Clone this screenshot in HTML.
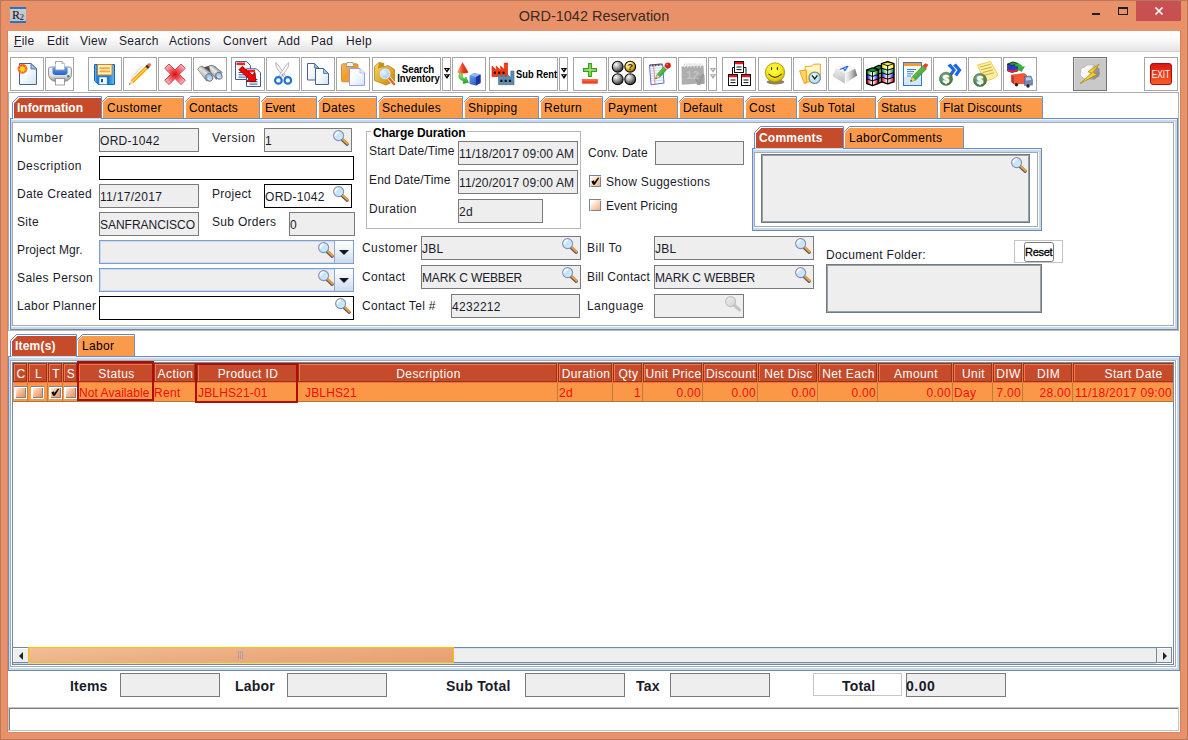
<!DOCTYPE html>
<html><head><meta charset="utf-8"><title>ORD-1042 Reservation</title>
<style>
html,body{margin:0;padding:0;}
body{width:1188px;height:740px;overflow:hidden;position:relative;background:#E99168;font-family:"Liberation Sans",Arial,sans-serif;font-size:12px;color:#1b1b2b;}
body div,body span,body svg{position:absolute;}
.t{white-space:nowrap;line-height:16px;height:16px;font-size:12px;letter-spacing:0.3px;}
.b{white-space:nowrap;line-height:16px;height:16px;font-size:12px;font-weight:bold;letter-spacing:-0.1px;}
.tab{white-space:nowrap;line-height:16px;height:16px;font-size:12px;color:#000;letter-spacing:0.35px;}
.tabs{white-space:nowrap;line-height:16px;height:16px;font-size:12px;font-weight:bold;color:#fff;letter-spacing:0.2px;}
.h{white-space:nowrap;line-height:16px;height:16px;font-size:12px;color:#fff;text-align:center;letter-spacing:0.4px;}
.r{white-space:nowrap;line-height:16px;height:16px;font-size:12px;color:#F20D0D;letter-spacing:0.3px;}
.tot{white-space:nowrap;line-height:18px;height:18px;font-size:14px;font-weight:bold;color:#1b1b2b;letter-spacing:0.2px;}
.ic{overflow:visible;}
</style></head><body>
<svg width="0" height="0" style="left:0;top:0"><defs>
<linearGradient id="lens" x1="0" y1="0" x2="1" y2="1"><stop offset="0" stop-color="#F4FCFF"/><stop offset="0.5" stop-color="#BFE6FA"/><stop offset="1" stop-color="#D8F0FC"/></linearGradient>
<linearGradient id="lensg" x1="0" y1="0" x2="1" y2="1"><stop offset="0" stop-color="#F0F0F0"/><stop offset="1" stop-color="#D0D0D0"/></linearGradient>
<symbol id="mag" viewBox="0 0 18 18" overflow="visible">
 <line x1="10.3" y1="10.8" x2="15.2" y2="15.2" stroke="#5A5A78" stroke-width="3.4" stroke-linecap="round"/>
 <line x1="10.8" y1="10.2" x2="15.6" y2="14.6" stroke="#F4A030" stroke-width="2.2" stroke-linecap="round"/>
 <circle cx="6.6" cy="6.6" r="5" fill="url(#lens)" stroke="#8C8CB0" stroke-width="1.1"/>
 <path d="M3.4 6.2 A3.4 3.4 0 0 1 6.4 3.2" fill="none" stroke="#fff" stroke-width="1.2" stroke-linecap="round"/>
</symbol>
<symbol id="magd" viewBox="0 0 18 18" overflow="visible">
 <line x1="10.5" y1="10.5" x2="15.4" y2="14.9" stroke="#C4C4C4" stroke-width="3.2" stroke-linecap="round"/>
 <circle cx="6.6" cy="6.6" r="5" fill="url(#lensg)" stroke="#C0C0C0" stroke-width="1.1"/>
</symbol>
</defs></svg>

<div style="left:0px;top:0px;width:1188px;height:740px;background:#E99168;box-shadow:inset 0 0 0 1px #B9785A;"></div>
<span style="left:0;top:5px;width:1188px;text-align:center;font-size:15px;line-height:22px;color:#3A2A22;white-space:nowrap;transform:scaleX(0.965);transform-origin:594px 0;" id="ttl">ORD-1042 Reservation</span>
<div style="left:10px;top:7px;width:16px;height:16px;background:linear-gradient(#1F70C4 0,#2A78C8 2px,#C9CCD2 2px,#BFC3CA 14px,#2A78C8 14px,#1F70C4 16px);"></div>
<span style="left:10px;top:8px;width:16px;height:14px;line-height:14px;font-size:12px;font-family:'Liberation Serif',serif;color:#0c0c0c;text-align:center;letter-spacing:-0.6px;white-space:nowrap;">R<span style="position:static;font-size:9px;vertical-align:-1px;letter-spacing:0;">2</span></span>
<div style="left:1092px;top:13px;width:8px;height:2px;background:#1E1E1E;"></div>
<div style="left:1118px;top:7px;width:10px;height:8px;border:1px solid #1E1E1E;border-top-width:2px;box-sizing:border-box;"></div>
<div style="left:1136px;top:1px;width:45px;height:20px;background:#C75050;"></div>
<svg style="left:1154px;top:6px" width="10" height="10" viewBox="0 0 10 10"><path d="M1.500 1.500 L8.500 8.500 M8.500 1.500 L1.500 8.500" stroke="#fff" stroke-width="1.700" fill="none"/></svg>
<div style="left:8px;top:31px;width:1172px;height:701px;background:#fff;"></div>
<div style="left:8px;top:31px;width:1172px;height:20px;background:linear-gradient(#FFFFFF,#FBFBFB 40%,#E4E4E4);border-bottom:1px solid #D0D0D0;"></div>
<span class="t" style="left:14px;top:33px;color:#1b1b2b;"><span style="position:static;text-decoration:underline;">F</span>ile</span>
<span class="t" style="left:47px;top:33px;">Edit</span>
<span class="t" style="left:80px;top:33px;">View</span>
<span class="t" style="left:119px;top:33px;">Search</span>
<span class="t" style="left:169px;top:33px;">Actions</span>
<span class="t" style="left:223px;top:33px;">Convert</span>
<span class="t" style="left:278px;top:33px;">Add</span>
<span class="t" style="left:311px;top:33px;">Pad</span>
<span class="t" style="left:346px;top:33px;">Help</span>
<div style="left:10px;top:57px;width:34px;height:34px;border:1px solid #A6A6A6;box-sizing:border-box;background:#fff;"></div>
<div style="left:45px;top:57px;width:29px;height:34px;border:1px solid #A6A6A6;box-sizing:border-box;background:#fff;"></div>
<div style="left:88px;top:57px;width:34px;height:34px;border:1px solid #A6A6A6;box-sizing:border-box;background:#fff;"></div>
<div style="left:123px;top:57px;width:34px;height:34px;border:1px solid #A6A6A6;box-sizing:border-box;background:#fff;"></div>
<div style="left:158px;top:57px;width:34px;height:34px;border:1px solid #A6A6A6;box-sizing:border-box;background:#fff;"></div>
<div style="left:193px;top:57px;width:34px;height:34px;border:1px solid #A6A6A6;box-sizing:border-box;background:#fff;"></div>
<div style="left:231px;top:57px;width:34px;height:34px;border:1px solid #A6A6A6;box-sizing:border-box;background:#fff;"></div>
<div style="left:266px;top:57px;width:34px;height:34px;border:1px solid #A6A6A6;box-sizing:border-box;background:#fff;"></div>
<div style="left:301px;top:57px;width:34px;height:34px;border:1px solid #A6A6A6;box-sizing:border-box;background:#fff;"></div>
<div style="left:336px;top:57px;width:34px;height:34px;border:1px solid #A6A6A6;box-sizing:border-box;background:#fff;"></div>
<div style="left:372px;top:57px;width:69px;height:34px;border:1px solid #A6A6A6;box-sizing:border-box;background:#fff;"></div>
<div style="left:442px;top:57px;width:9px;height:34px;border:1px solid #A6A6A6;box-sizing:border-box;background:#fff;"></div>
<div style="left:452px;top:57px;width:34px;height:34px;border:1px solid #A6A6A6;box-sizing:border-box;background:#fff;"></div>
<div style="left:489px;top:57px;width:69px;height:34px;border:1px solid #A6A6A6;box-sizing:border-box;background:#fff;"></div>
<div style="left:559px;top:57px;width:9px;height:34px;border:1px solid #A6A6A6;box-sizing:border-box;background:#fff;"></div>
<div style="left:573px;top:57px;width:34px;height:34px;border:1px solid #A6A6A6;box-sizing:border-box;background:#fff;"></div>
<div style="left:608px;top:57px;width:34px;height:34px;border:1px solid #A6A6A6;box-sizing:border-box;background:#fff;"></div>
<div style="left:643px;top:57px;width:34px;height:34px;border:1px solid #A6A6A6;box-sizing:border-box;background:#fff;"></div>
<div style="left:678px;top:57px;width:29px;height:34px;border:1px solid #A6A6A6;box-sizing:border-box;background:#fff;"></div>
<div style="left:708px;top:57px;width:9px;height:34px;border:1px solid #A6A6A6;box-sizing:border-box;background:#fff;"></div>
<div style="left:722px;top:57px;width:34px;height:34px;border:1px solid #A6A6A6;box-sizing:border-box;background:#fff;"></div>
<div style="left:758px;top:57px;width:34px;height:34px;border:1px solid #A6A6A6;box-sizing:border-box;background:#fff;"></div>
<div style="left:793px;top:57px;width:34px;height:34px;border:1px solid #A6A6A6;box-sizing:border-box;background:#fff;"></div>
<div style="left:828px;top:57px;width:34px;height:34px;border:1px solid #A6A6A6;box-sizing:border-box;background:#fff;"></div>
<div style="left:863px;top:57px;width:34px;height:34px;border:1px solid #A6A6A6;box-sizing:border-box;background:#fff;"></div>
<div style="left:898px;top:57px;width:34px;height:34px;border:1px solid #A6A6A6;box-sizing:border-box;background:#fff;"></div>
<div style="left:933px;top:57px;width:34px;height:34px;border:1px solid #A6A6A6;box-sizing:border-box;background:#fff;"></div>
<div style="left:968px;top:57px;width:34px;height:34px;border:1px solid #A6A6A6;box-sizing:border-box;background:#fff;"></div>
<div style="left:1003px;top:57px;width:34px;height:34px;border:1px solid #A6A6A6;box-sizing:border-box;background:#fff;"></div>
<div style="left:1144px;top:57px;width:34px;height:34px;border:1px solid #A6A6A6;box-sizing:border-box;background:#fff;"></div>
<div style="left:1073px;top:57px;width:34px;height:34px;border:1px solid #747474;box-sizing:border-box;background:#C9C9C9;box-shadow:inset 1px 1px 0 #D8D8D8;"></div>
<div style="left:8px;top:92px;width:1171px;height:1px;background:#ABABAB;"></div>
<div style="left:8px;top:92px;width:1px;height:239px;background:#ABABAB;"></div>
<svg class="ic" style="left:0;top:0" width="1188" height="95" viewBox="0 0 1188 95">
<defs>
<linearGradient id="gdoc" x1="0" y1="0" x2="1" y2="1"><stop offset="0" stop-color="#fff"/><stop offset="0.5" stop-color="#F4F9FE"/><stop offset="1" stop-color="#CFE3F6"/></linearGradient>
<radialGradient id="gstar"><stop offset="0" stop-color="#FFE000"/><stop offset="0.35" stop-color="#FFB000"/><stop offset="0.6" stop-color="#F24A24"/><stop offset="0.8" stop-color="#F25A34" stop-opacity="0.85"/><stop offset="1" stop-color="#F46A44" stop-opacity="0"/></radialGradient>
<linearGradient id="gprn" x1="0" y1="0" x2="0" y2="1"><stop offset="0" stop-color="#F6F6F6"/><stop offset="0.6" stop-color="#E2E2E2"/><stop offset="1" stop-color="#8E8E8E"/></linearGradient>
<linearGradient id="gblue" x1="0" y1="0" x2="0" y2="1"><stop offset="0" stop-color="#58A0F8"/><stop offset="1" stop-color="#2060D8"/></linearGradient>
<linearGradient id="gsave" x1="0" y1="0" x2="1" y2="0"><stop offset="0" stop-color="#8CCBF5"/><stop offset="0.12" stop-color="#1C7CD6"/><stop offset="0.7" stop-color="#1C7CD6"/><stop offset="1" stop-color="#6CC0F4"/></linearGradient>
<radialGradient id="gx" cx="0.5" cy="0.5" r="0.62"><stop offset="0" stop-color="#E00808"/><stop offset="0.22" stop-color="#E83038"/><stop offset="0.55" stop-color="#F0747C"/><stop offset="1" stop-color="#FAC8CC"/></radialGradient>
<radialGradient id="glens2" cx="0.4" cy="0.7" r="0.7"><stop offset="0" stop-color="#D8ECFF"/><stop offset="1" stop-color="#78ACEC"/></radialGradient>
<linearGradient id="gbinL" x1="0.75" y1="0.1" x2="0.2" y2="0.8"><stop offset="0" stop-color="#4A4A4A"/><stop offset="0.45" stop-color="#E4E4E4"/><stop offset="0.7" stop-color="#C4C4C4"/><stop offset="1" stop-color="#5E5E5E"/></linearGradient><linearGradient id="gbinR" x1="0.75" y1="0.1" x2="0.2" y2="0.8"><stop offset="0" stop-color="#5A5A5A"/><stop offset="0.45" stop-color="#EAEAEA"/><stop offset="0.7" stop-color="#C8C8C8"/><stop offset="1" stop-color="#4E4E4E"/></linearGradient>
<linearGradient id="gclip" x1="0" y1="0" x2="1" y2="1"><stop offset="0" stop-color="#F8B860"/><stop offset="0.5" stop-color="#F49828"/><stop offset="1" stop-color="#F8B050"/></linearGradient>
<linearGradient id="gbox" x1="0" y1="0" x2="1" y2="1"><stop offset="0" stop-color="#F8D868"/><stop offset="0.6" stop-color="#E0A820"/><stop offset="1" stop-color="#B88010"/></linearGradient>
<radialGradient id="glens3" cx="0.35" cy="0.35" r="0.8"><stop offset="0" stop-color="#EAF6FC"/><stop offset="1" stop-color="#8CC4DC"/></radialGradient>
<linearGradient id="gcone" x1="0" y1="0" x2="1" y2="0"><stop offset="0" stop-color="#FFB090"/><stop offset="0.5" stop-color="#F04020"/><stop offset="1" stop-color="#C82000"/></linearGradient>
<linearGradient id="gcube" x1="0" y1="0" x2="1" y2="1"><stop offset="0" stop-color="#78A8F0"/><stop offset="1" stop-color="#1840B0"/></linearGradient>
<linearGradient id="ggreen" x1="0" y1="0" x2="0" y2="1"><stop offset="0" stop-color="#98F070"/><stop offset="1" stop-color="#20A020"/></linearGradient>
<linearGradient id="gplus" x1="0" y1="0" x2="1" y2="1"><stop offset="0" stop-color="#48A818"/><stop offset="0.5" stop-color="#B8E890"/><stop offset="1" stop-color="#38981038"/></linearGradient>
<linearGradient id="gminus" x1="0" y1="0" x2="0" y2="1"><stop offset="0" stop-color="#FF7848"/><stop offset="1" stop-color="#E83010"/></linearGradient>
<radialGradient id="gball" cx="0.35" cy="0.3" r="0.75"><stop offset="0" stop-color="#FFFFFF"/><stop offset="0.45" stop-color="#A4A4A4"/><stop offset="1" stop-color="#2A2A2A"/></radialGradient>
<radialGradient id="gbally" cx="0.35" cy="0.3" r="0.75"><stop offset="0" stop-color="#FFFFE0"/><stop offset="0.5" stop-color="#F8D030"/><stop offset="1" stop-color="#906000"/></radialGradient>
<radialGradient id="gsmile" cx="0.45" cy="0.38" r="0.7"><stop offset="0" stop-color="#FFFF50"/><stop offset="0.55" stop-color="#F6E818"/><stop offset="0.85" stop-color="#CDB600"/><stop offset="1" stop-color="#8E7C00"/></radialGradient>
<linearGradient id="gfold" x1="0" y1="0" x2="0" y2="1"><stop offset="0" stop-color="#FFFBD8"/><stop offset="0.5" stop-color="#FFEC70"/><stop offset="1" stop-color="#FFD418"/></linearGradient>
<radialGradient id="gclock" cx="0.4" cy="0.35" r="0.7"><stop offset="0" stop-color="#EAF9FF"/><stop offset="1" stop-color="#A4DAF0"/></radialGradient>
<linearGradient id="gkeyr" x1="0" y1="0" x2="1" y2="0"><stop offset="0" stop-color="#FFFFFF"/><stop offset="0.45" stop-color="#D0D0D0"/><stop offset="1" stop-color="#6E6E6E"/></linearGradient><linearGradient id="gkeyl" x1="0" y1="0" x2="0" y2="1"><stop offset="0" stop-color="#F0F0F0"/><stop offset="1" stop-color="#BDBDBD"/></linearGradient>
<radialGradient id="gdollar" cx="0.4" cy="0.35" r="0.7"><stop offset="0" stop-color="#88B080"/><stop offset="1" stop-color="#38703A"/></radialGradient>
<linearGradient id="gexit" x1="0" y1="0" x2="0" y2="1"><stop offset="0" stop-color="#D81810"/><stop offset="0.5" stop-color="#F03818"/><stop offset="1" stop-color="#F86028"/></linearGradient>
<linearGradient id="gcloud" x1="0" y1="0" x2="1" y2="0.3"><stop offset="0" stop-color="#FFFFFF"/><stop offset="0.55" stop-color="#F4F4F4"/><stop offset="0.75" stop-color="#A0A0A0"/><stop offset="1" stop-color="#8A8A8A"/></linearGradient><linearGradient id="gpen" x1="0" y1="0" x2="1" y2="1"><stop offset="0" stop-color="#90E060"/><stop offset="1" stop-color="#208818"/></linearGradient>
</defs>
<path d="M19.5 63.5 H31 L36.5 69 V84.5 H19.5 Z" fill="url(#gdoc)" stroke="#47608F"/><path d="M31 63.5 V69 H36.5 Z" fill="#9CCBF0" stroke="#47608F" stroke-width="0.8"/>
<circle cx="22.5" cy="68.800" r="5.500" fill="url(#gstar)"/><path d="M22.5 64.5 L23.4 67.6 L26.3 66.2 L24.6 68.9 L27.4 70.2 L24.2 70.4 L24.6 73.5 L22.5 71.2 L20.2 73.4 L20.7 70.3 L17.7 69.8 L20.5 68.4 L18.9 65.8 L21.7 67.4 Z" fill="#FFD810" opacity="0.85"/>
<path d="M55.5 61.5 H62 L64.5 64 V71 H55.5 Z" fill="#fff" stroke="#9A9A9A" stroke-width="0.9"/><path d="M62 61.5 V64 H64.5" fill="#E8E8E8" stroke="#9A9A9A" stroke-width="0.7"/>
<path d="M48.5 69 Q48.5 67 51 67 H69 Q71.5 67 71.5 69 V74 Q71.5 80 64.5 81.5 H55.5 Q48.5 80 48.5 74 Z" fill="url(#gprn)" stroke="#7C7C7C" stroke-width="0.8"/>
<path d="M52.5 67.3 H67.5 V72 Q67.5 75 64 75 H56 Q52.500 75 52.5 72 Z" fill="url(#gblue)"/><rect x="55" y="67.3" width="10" height="3.6" fill="#8A8A92"/><rect x="55.6" y="64" width="8.8" height="5.6" fill="#fff"/>
<rect x="55.5" y="78.5" width="9" height="6.5" fill="#fff" stroke="#8A8A8A" stroke-width="0.8"/><circle cx="68.3" cy="76.3" r="1.2" fill="#20A030"/>
<path d="M94.5 64.5 H114.500 V84.5 H98.5 L94.5 80.8 Z" fill="url(#gsave)" stroke="#1464B8"/>
<rect x="97.5" y="64.5" width="14.5" height="10.5" fill="#FFEFC4" stroke="#CC8424"/><rect x="99.5" y="67.3" width="10.5" height="1.8" fill="#F8A830"/><rect x="99.5" y="70.5" width="10.5" height="1.8" fill="#F8A830"/>
<rect x="99.3" y="77.3" width="7.6" height="7" fill="#F4F8FF"/><rect x="101" y="79" width="2" height="3.3" fill="#1458C8"/>
<path d="M130.500 80.500 L143.500 66.500 L140 66 L131 76 Z" fill="#C8C8C8" opacity="0.350"/>
<path d="M129 84.700 L130.950 80.310 L133.450 82.890 Z" fill="#F0D0A8"/><path d="M129 84.700 L129.700 83.100 L130.600 84 Z" fill="#303030"/>
<path d="M130.950 80.310 L145.350 66.300 L147.850 68.900 L133.450 82.890 Z" fill="#F8A000"/><path d="M131.800 81.200 L146.200 67.200 L147 68 L132.600 82 Z" fill="#FFD860"/>
<path d="M145.350 66.300 L147.100 64.600 L149.600 67.200 L147.850 68.900 Z" fill="#2A2A2A"/><path d="M147.100 64.600 Q149 62.600 150.700 63.800 Q151.900 65.300 149.600 67.200 Z" fill="#F26A38"/>
<path d="M169 64 L175 70 L181 64 L185.300 68.300 L179.300 74.300 L185.300 80.300 L181 84.600 L175 78.600 L169 84.600 L164.700 80.300 L170.700 74.300 L164.700 68.300 Z" fill="url(#gx)" stroke="#CC3840" stroke-width="0.900" stroke-linejoin="round"/>
<path d="M204 67.300 L210.500 65.300 L216 66.800 L217.500 72.500 L211 75 L205.500 72 Z" fill="#4C4C4C"/>
<path d="M197.800 69.600 Q198.500 66.300 202.300 66 L213 74.200 L206.800 81.300 Z" fill="url(#gbinL)" stroke="#5A5A5A" stroke-width="0.500"/>
<path d="M208.800 66.300 Q211 64.800 213.800 65.800 L222.300 72.300 L216.300 79.500 L210.500 72.500 Z" fill="url(#gbinR)" stroke="#5A5A5A" stroke-width="0.500"/>
<ellipse cx="209.300" cy="77.400" rx="3.300" ry="3.900" transform="rotate(-20 209.3 77.4)" fill="url(#glens2)" stroke="#6C6C6C" stroke-width="0.900"/><ellipse cx="218.900" cy="75.700" rx="3" ry="3.600" transform="rotate(-20 218.9 75.7)" fill="url(#glens2)" stroke="#6C6C6C" stroke-width="0.900"/>
<path d="M235.5 61.5 H246.5 L250.5 65.5 V79.5 H235.5 Z" fill="#fff" stroke="#3A5AA4"/>
<rect x="236.5" y="62.5" width="8.5" height="2.600" fill="#F82010"/>
<rect x="238.5" y="72.0" width="9" height="1" fill="#3A5AA4"/>
<rect x="238.5" y="74.3" width="9" height="1" fill="#3A5AA4"/>
<rect x="238.5" y="76.6" width="9" height="1" fill="#3A5AA4"/>
<path d="M246.5 68.8 H256.5 L260.5 72.8 V86.5 H246.5 Z" fill="#fff" stroke="#3A5AA4"/>
<rect x="247.5" y="69.8" width="7.5" height="2.600" fill="#F82010"/>
<rect x="249.5" y="79.0" width="8" height="1" fill="#3A5AA4"/>
<rect x="249.5" y="81.3" width="8" height="1" fill="#3A5AA4"/>
<rect x="249.5" y="83.6" width="8" height="1" fill="#3A5AA4"/>
<path d="M238.800 69.800 L242.300 66.300 L252.200 75 L255 72.300 L256 81.400 L246.300 81.600 L249 78.800 Z" fill="#F80000" stroke="#500000" stroke-width="0.700" stroke-linejoin="round"/>
<path d="M275.800 62.500 Q275 66.500 278.500 70.500 L284.500 78 L286 76.500 L279 66 Z" fill="#F4F4F4" stroke="#A8A8A8" stroke-width="0.8"/><path d="M288.700 62.500 Q289.500 66.500 286 70.500 L280 78 L278.500 76.500 L285.500 66 Z" fill="#FAFAFA" stroke="#A8A8A8" stroke-width="0.8"/>
<circle cx="278.400" cy="80.400" r="3.300" fill="none" stroke="#2072D4" stroke-width="2.200"/><circle cx="287.800" cy="80.400" r="3.300" fill="none" stroke="#2072D4" stroke-width="2.200"/><circle cx="282.600" cy="75" r="0.800" fill="#777"/>
<path d="M307.5 63.5 H314.5 L319.0 68.0 V80.0 H307.5 Z" fill="url(#gdoc)" stroke="#47608F"/><path d="M314.5 63.5 V68.0 H319.0 Z" fill="#8CCBF2" stroke="#47608F" stroke-width="0.700"/>
<path d="M315.5 68.5 H323.5 L328.5 73.5 V84.5 H315.5 Z" fill="url(#gdoc)" stroke="#47608F"/><path d="M323.5 68.5 V73.5 H328.5 Z" fill="#8CCBF2" stroke="#47608F" stroke-width="0.700"/>
<rect x="341.500" y="63.800" width="16.500" height="18" rx="1.500" fill="url(#gclip)" stroke="#D08828" stroke-width="0.900"/><path d="M346 66.500 L347 62.500 H353 L354 66.500 Z" fill="#F4F4F4" stroke="#8A8A8A" stroke-width="0.800"/>
<path d="M349.500 68.500 H360 L364.500 73 V85.500 H349.500 Z" fill="url(#gdoc)" stroke="#8C94E0" stroke-width="0.900"/><path d="M360 68.500 V73 H364.500" fill="#E8F0FC" stroke="#A8B0E8" stroke-width="0.700"/>
<path d="M374.500 66.500 L379 62.500 L384 63.500 L383 67 L388 65.500 L394.500 69.500 V81 L386 85 L374.500 80.500 Z" fill="url(#gbox)" stroke="#A87810" stroke-width="0.700"/><path d="M379 62.500 L384 63.500 L383 67 L378 68.500 Z" fill="#C89018"/>
<path d="M389 78 L394 84" stroke="#F0F0F0" stroke-width="4" stroke-linecap="round"/><path d="M389 78 L394 84" stroke="#F06020" stroke-width="2.400" stroke-linecap="round"/><circle cx="385" cy="73.700" r="5" fill="url(#glens3)" stroke="#E8E8E8" stroke-width="1.600"/><circle cx="385" cy="73.700" r="5.700" fill="none" stroke="#9A9A9A" stroke-width="0.500"/>
<text x="418" y="72.600" font-family="Liberation Sans,Arial,sans-serif" font-size="10" font-weight="bold" fill="#000" text-anchor="middle" textLength="32.5" lengthAdjust="spacingAndGlyphs">Search</text><text x="418.500" y="82" font-family="Liberation Sans,Arial,sans-serif" font-size="10" font-weight="bold" fill="#000" text-anchor="middle" textLength="42.5" lengthAdjust="spacingAndGlyphs">Inventory</text>
<path d="M443.8 68 H450.2 L447 72.8 Z M443.8 74.2 H450.2 L447 79 Z" fill="#000"/>
<circle cx="446.8" cy="69.400" r="0.600" fill="#fff"/><circle cx="446.8" cy="75.600" r="0.600" fill="#fff"/>
<path d="M462.500 62 L468.500 72.500 Q463 74.500 457 72.500 Z" fill="url(#gcone)"/>
<path d="M469.500 75.500 L474 73 L480.500 74.500 V83 L476 85.500 L469.500 84 Z" fill="url(#gcube)"/><path d="M469.500 75.500 L474 73 L480.500 74.500 L476 77 Z" fill="#90B8F4"/><path d="M476 77 L480.500 74.500 V83 L476 85.500 Z" fill="#1838A0"/>
<path d="M459.500 73.500 Q457 79 463.500 81 L463 83.500 L468.500 82.500 L466 77 L465 79 Q461.500 78 462.500 74 Z" fill="url(#ggreen)" stroke="#18901A" stroke-width="0.500"/>
<path d="M492 76.5 V66 L496.3 70.2 V66 L500.6 70.2 V66 L504.3 69.6 V63 H507.5 V76.5 Z" fill="#F83810" stroke="#C82000" stroke-width="0.600" stroke-linejoin="miter"/>
<rect x="493.8" y="71.64" width="2.200" height="2.200" fill="#111"/>
<rect x="498.1" y="71.64" width="2.200" height="2.200" fill="#111"/>
<rect x="502.40000000000003" y="71.64" width="2.200" height="2.200" fill="#111"/>
<path d="M498.5 84.7 V74 L502.8 78.2 V74 L507.1 78.2 V74 L510.8 77.6 V71 H514.0 V84.7 Z" fill="#5C8CB0" stroke="#3C6C90" stroke-width="0.600" stroke-linejoin="miter"/>
<rect x="500.3" y="79.768" width="2.200" height="2.200" fill="#111"/>
<rect x="504.6" y="79.768" width="2.200" height="2.200" fill="#111"/>
<rect x="508.90000000000003" y="79.768" width="2.200" height="2.200" fill="#111"/>
<text x="516" y="77.500" font-family="Liberation Sans,Arial,sans-serif" font-size="10" font-weight="bold" fill="#000" textLength="41" lengthAdjust="spacingAndGlyphs">Sub Rent</text>
<path d="M560.8 68 H567.2 L564 72.8 Z M560.8 74.2 H567.2 L564 79 Z" fill="#000"/>
<circle cx="563.8" cy="69.400" r="0.600" fill="#fff"/><circle cx="563.8" cy="75.600" r="0.600" fill="#fff"/>
<path d="M588.700 63.600 H591.300 V68.700 H596.400 V71.300 H591.300 V76.400 H588.700 V71.300 H583.600 V68.700 H588.700 Z" fill="#B4E88C" stroke="#36A014" stroke-width="1.300"/>
<rect x="582.300" y="79.300" width="15.400" height="4" fill="url(#gminus)" stroke="#E84020" stroke-width="0.500"/>
<circle cx="617.7" cy="66.7" r="5.400" fill="url(#gball)" stroke="#0a0a0a" stroke-width="1.100"/>
<circle cx="630.2" cy="66.7" r="5.400" fill="url(#gbally)" stroke="#0a0a0a" stroke-width="1.100"/>
<circle cx="617.7" cy="79.2" r="5.400" fill="url(#gball)" stroke="#0a0a0a" stroke-width="1.100"/>
<circle cx="630.2" cy="79.2" r="5.400" fill="url(#gball)" stroke="#0a0a0a" stroke-width="1.100"/>
<text x="630.200" y="70.200" font-family="Liberation Sans,Arial,sans-serif" font-size="9.500" font-weight="bold" fill="#222" text-anchor="middle">?</text>
<path d="M649.500 65 L662.500 64 L664 83 L651 84.800 Z" fill="#F8FBFF" stroke="#5858C8" stroke-width="0.900"/>
<path d="M651 68.5 L663 67.7" stroke="#A8C8F0" stroke-width="0.600"/>
<path d="M651 71.0 L663 70.2" stroke="#A8C8F0" stroke-width="0.600"/>
<path d="M651 73.5 L663 72.7" stroke="#A8C8F0" stroke-width="0.600"/>
<path d="M651 76.0 L663 75.2" stroke="#A8C8F0" stroke-width="0.600"/>
<path d="M651 78.5 L663 77.7" stroke="#A8C8F0" stroke-width="0.600"/>
<path d="M651 81.0 L663 80.2" stroke="#A8C8F0" stroke-width="0.600"/>
<path d="M653.700 65.500 L655 84" stroke="#F07050" stroke-width="0.800"/><path d="M650.500 65.500 L661.500 64.600" stroke="#333" stroke-width="2.200" stroke-dasharray="0.800 0.700"/>
<path d="M655.500 78.800 L657 74.500 L665 65.500 L668 68.200 L660 77 Z" fill="url(#gpen)" stroke="#187818" stroke-width="0.500"/><path d="M655.500 78.800 L657 74.500 L660 77 Z" fill="#E8C8A0"/><path d="M655.500 78.800 L656 77.300 L657 78.200 Z" fill="#333"/><circle cx="667.800" cy="65.600" r="3" fill="#E01808"/><circle cx="667" cy="64.600" r="1" fill="#F87060"/><path d="M664 66.500 L667 69.300" stroke="#C0C0C0" stroke-width="1.200"/>
<path d="M681.500 66.500 L703.500 65.500 L704.500 83.500 L697.500 85 L696.500 83.800 L681.800 84.800 Z" fill="#AEAEAE"/><path d="M696.500 76 L704.500 75 L704.500 83.500 L697.500 85 Z" fill="#A2A2A2"/>
<path d="M684.5 67.500 V65 Q684.5 63.600 685.7 63.800 Q686.7 64.200 686.5 66" fill="none" stroke="#E4E4E4" stroke-width="1.100"/>
<path d="M687.7 67.500 V65 Q687.7 63.600 688.9000000000001 63.800 Q689.9000000000001 64.200 689.7 66" fill="none" stroke="#E4E4E4" stroke-width="1.100"/>
<path d="M690.9 67.500 V65 Q690.9 63.600 692.1 63.800 Q693.1 64.200 692.9 66" fill="none" stroke="#E4E4E4" stroke-width="1.100"/>
<path d="M694.1 67.500 V65 Q694.1 63.600 695.3000000000001 63.800 Q696.3000000000001 64.200 696.1 66" fill="none" stroke="#E4E4E4" stroke-width="1.100"/>
<path d="M697.3 67.500 V65 Q697.3 63.600 698.5 63.800 Q699.5 64.200 699.3 66" fill="none" stroke="#E4E4E4" stroke-width="1.100"/>
<path d="M700.5 67.500 V65 Q700.5 63.600 701.7 63.800 Q702.7 64.200 702.5 66" fill="none" stroke="#E4E4E4" stroke-width="1.100"/>
<text x="692.500" y="78.500" font-family="Liberation Sans,Arial,sans-serif" font-size="11.500" font-weight="bold" fill="#C2C2C2" text-anchor="middle">12</text><path d="M695.500 79 L699 84 L703.500 74" fill="none" stroke="#969696" stroke-width="1.500"/>
<path d="M709.8 68 H716.2 L713 72.8 Z M709.8 74.2 H716.2 L713 79 Z" fill="#ABABAB"/>
<circle cx="712.8" cy="69.400" r="0.600" fill="#fff"/><circle cx="712.8" cy="75.600" r="0.600" fill="#fff"/>
<path d="M732.500 74 V67.500 H746 V74" fill="none" stroke="#111" stroke-width="1"/>
<rect x="734.5" y="61.5" width="9" height="11" fill="#fff" stroke="#111" stroke-width="1"/><rect x="735.0" y="62.0" width="8" height="2.200" fill="#F01018"/><rect x="736.5" y="66.5" width="5" height="1" fill="#111"/><rect x="736.5" y="69.1" width="5" height="1" fill="#111"/>
<rect x="728.5" y="74.5" width="9" height="11" fill="#fff" stroke="#111" stroke-width="1"/><rect x="729.0" y="75.0" width="8" height="2.200" fill="#F01018"/><rect x="730.5" y="79.5" width="5" height="1" fill="#111"/><rect x="730.5" y="82.1" width="5" height="1" fill="#111"/>
<rect x="741.5" y="74.5" width="9" height="11" fill="#fff" stroke="#111" stroke-width="1"/><rect x="742.0" y="75.0" width="8" height="2.200" fill="#F01018"/><rect x="743.5" y="79.5" width="5" height="1" fill="#111"/><rect x="743.5" y="82.1" width="5" height="1" fill="#111"/>
<ellipse cx="775.500" cy="81.900" rx="8.800" ry="2.500" fill="#3E3000" opacity="0.600"/><circle cx="775" cy="72.500" r="9.700" fill="url(#gsmile)" stroke="#94820A" stroke-width="0.700"/>
<ellipse cx="771.600" cy="68.600" rx="0.650" ry="1.800" fill="#3C3C28"/><ellipse cx="777.400" cy="68.600" rx="0.650" ry="1.800" fill="#3C3C28"/><path d="M768.800 74.200 Q775 80.600 781.300 74.200" fill="none" stroke="#4A3A10" stroke-width="1.100" stroke-linecap="round"/>
<path d="M805 66.500 L811.500 66 L813.500 64.300 L820.300 64 V80 L806 82.500 Z" fill="#FFF6C8" stroke="#E89818" stroke-width="0.900" stroke-linejoin="round"/>
<path d="M806.300 68.500 L817.500 67.500 V80 L806.300 82.500 Z" fill="url(#gfold)"/>
<path d="M799.600 70.800 L806.300 70.200 L806.300 83 L804.300 83.500 Z" fill="#FFD860" stroke="#E89818" stroke-width="0.900" stroke-linejoin="round"/>
<circle cx="814.700" cy="77.800" r="5.700" fill="url(#gclock)" stroke="#7E86A0" stroke-width="1.200"/><path d="M812 75.300 L814.700 79 L817.400 75.300" fill="none" stroke="#181818" stroke-width="1.300"/>
<path d="M836 68 L844 63.800 L855 68.500 L857.200 75.600 L844.700 83.600 L832.500 76 Z" fill="#EDEDED"/>
<path d="M845.200 73 L855 68.500 L857.200 75.600 L844.700 83.600 Z" fill="url(#gkeyr)"/>
<path d="M836 68 L845.200 73 L844.700 83.600 L832.500 76 Z" fill="url(#gkeyl)"/>
<path d="M836 68 L844 63.800 L855 68.500 L845.200 73 Z" fill="#FCFCFC" stroke="#F0F0F0" stroke-width="0.600"/>
<g transform="translate(844.8 68.3) rotate(22) skewX(-30)"><text x="0" y="3" font-family="Liberation Sans,Arial,sans-serif" font-size="9" font-weight="bold" fill="#1060E0" text-anchor="middle">A</text></g>
<linearGradient id="cga" x1="0" y1="0" x2="1" y2="0"><stop offset="0" stop-color="#10A020"/><stop offset="1" stop-color="#fff"/></linearGradient><linearGradient id="cgb" x1="0" y1="0" x2="1" y2="0"><stop offset="0" stop-color="#fff"/><stop offset="1" stop-color="#10A020"/></linearGradient>
<linearGradient id="cba" x1="0" y1="0" x2="1" y2="0"><stop offset="0" stop-color="#2030F0"/><stop offset="1" stop-color="#fff"/></linearGradient><linearGradient id="cbb" x1="0" y1="0" x2="1" y2="0"><stop offset="0" stop-color="#fff"/><stop offset="1" stop-color="#2030F0"/></linearGradient>
<linearGradient id="cra" x1="0" y1="0" x2="1" y2="0"><stop offset="0" stop-color="#F01820"/><stop offset="1" stop-color="#fff"/></linearGradient><linearGradient id="crb" x1="0" y1="0" x2="1" y2="0"><stop offset="0" stop-color="#fff"/><stop offset="1" stop-color="#F01820"/></linearGradient>
<linearGradient id="cya" x1="0" y1="0" x2="1" y2="0"><stop offset="0" stop-color="#E8E810"/><stop offset="1" stop-color="#fff"/></linearGradient><linearGradient id="cyb" x1="0" y1="0" x2="1" y2="0"><stop offset="0" stop-color="#fff"/><stop offset="1" stop-color="#E8E810"/></linearGradient>
<path d="M874.5 67.5 L879.0 65.5 L883.5 67.5 V81.0 L879.0 83.0 L874.5 81.0 Z" fill="#000" stroke="#000" stroke-width="1.600" stroke-linejoin="round"/>
<path d="M875.1 68.0 L878.5 69.8 V73.3 L875.1 71.5 Z" fill="url(#cga)"/>
<path d="M882.9 68.0 L879.5 69.8 V73.3 L882.9 71.5 Z" fill="url(#cgb)"/>
<path d="M875.1 72.5 L878.5 74.3 V77.8 L875.1 76.0 Z" fill="url(#cba)"/>
<path d="M882.9 72.5 L879.5 74.3 V77.8 L882.9 76.0 Z" fill="url(#cbb)"/>
<path d="M875.1 77.0 L878.5 78.8 V82.3 L875.1 80.5 Z" fill="url(#cra)"/>
<path d="M882.9 77.0 L879.5 78.8 V82.3 L882.9 80.5 Z" fill="url(#crb)"/>
<path d="M875.7 67.5 L879.0 66.1 L882.3 67.5 L879.0 69.0 Z" fill="#0C9C1C"/>
<path d="M866.8 70 L872.5 68 L878.1999999999999 70 V83.5 L872.5 85.5 L866.8 83.5 Z" fill="#000" stroke="#000" stroke-width="1.600" stroke-linejoin="round"/>
<path d="M867.4 70.5 L872.0 72.3 V75.8 L867.4 74.0 Z" fill="url(#cga)"/>
<path d="M877.5999999999999 70.5 L873.0 72.3 V75.8 L877.5999999999999 74.0 Z" fill="url(#cgb)"/>
<path d="M867.4 75.0 L872.0 76.8 V80.3 L867.4 78.5 Z" fill="url(#cba)"/>
<path d="M877.5999999999999 75.0 L873.0 76.8 V80.3 L877.5999999999999 78.5 Z" fill="url(#cbb)"/>
<path d="M867.4 79.5 L872.0 81.3 V84.8 L867.4 83.0 Z" fill="url(#cra)"/>
<path d="M877.5999999999999 79.5 L873.0 81.3 V84.8 L877.5999999999999 83.0 Z" fill="url(#crb)"/>
<path d="M868.0 70 L872.5 68.6 L876.9999999999999 70 L872.5 71.5 Z" fill="#0C9C1C"/>
<path d="M881.5 63.8 L887.7 61.8 L893.9 63.8 V81.8 L887.7 83.8 L881.5 81.8 Z" fill="#000" stroke="#000" stroke-width="1.600" stroke-linejoin="round"/>
<path d="M882.1 64.3 L887.2 66.1 V69.6 L882.1 67.8 Z" fill="url(#cya)"/>
<path d="M893.3 64.3 L888.2 66.1 V69.6 L893.3 67.8 Z" fill="url(#cyb)"/>
<path d="M882.1 68.8 L887.2 70.6 V74.1 L882.1 72.3 Z" fill="url(#cga)"/>
<path d="M893.3 68.8 L888.2 70.6 V74.1 L893.3 72.3 Z" fill="url(#cgb)"/>
<path d="M882.1 73.3 L887.2 75.1 V78.6 L882.1 76.8 Z" fill="url(#cba)"/>
<path d="M893.3 73.3 L888.2 75.1 V78.6 L893.3 76.8 Z" fill="url(#cbb)"/>
<path d="M882.1 77.8 L887.2 79.6 V83.1 L882.1 81.3 Z" fill="url(#cra)"/>
<path d="M893.3 77.8 L888.2 79.6 V83.1 L893.3 81.3 Z" fill="url(#crb)"/>
<path d="M882.7 63.8 L887.7 62.4 L892.6999999999999 63.8 L887.7 65.3 Z" fill="#F0F020"/>
<rect x="903.500" y="62.500" width="18" height="23" fill="#F4F8FF" stroke="#2878D8" stroke-width="1"/><rect x="904" y="63" width="17" height="3" fill="#FF9828"/><path d="M904 77 H921 V85 H904 Z" fill="#D8E8F8"/>
<rect x="907" y="69.0" width="9" height="0.900" fill="#2878D8"/>
<rect x="907" y="71.2" width="7" height="0.900" fill="#2878D8"/>
<rect x="907" y="73.4" width="6" height="0.900" fill="#2878D8"/>
<rect x="907" y="75.6" width="4" height="0.900" fill="#2878D8"/>
<path d="M910.500 81.500 L912 77 L923 65.500 L926.500 68.800 L915.500 80.300 Z" fill="url(#gpen)" stroke="#206818" stroke-width="0.500"/><path d="M910.500 81.500 L912 77 L915.500 80.300 Z" fill="#F0D060"/><path d="M910.500 81.500 L911 79.800 L912.200 80.900 Z" fill="#222"/><path d="M922.500 66 L924.800 63.600 Q927 63 928.300 65 L926 68.300 Z" fill="#F04020"/>
<path d="M947.500 65.500 L950.500 63.500 L956 70 L951.500 76.500 L949 74.500 L952 70 Z M953 65.500 L956 63.500 L961.500 70 L957 76.500 L954.500 74.500 L957.500 70 Z" fill="#1C68E0"/>
<circle cx="946" cy="78.8" r="6.600" fill="url(#gdollar)" stroke="#2C6030" stroke-width="0.500"/><text x="946" y="82.8" font-family="Liberation Sans,Arial,sans-serif" font-size="11.500" font-weight="bold" fill="#fff" stroke="#fff" stroke-width="0.500" text-anchor="middle">$</text>
<path d="M977.500 65 L990.500 61.500 L998 75 Q993 80.500 984 80.500 Z" fill="#FFF0A0" stroke="#F0C030" stroke-width="0.800"/>
<path d="M980.0 67.0 L990.5 64.3" stroke="#D2B448" stroke-width="1.100"/>
<path d="M981.2 69.8 L991.7 67.1" stroke="#D2B448" stroke-width="1.100"/>
<path d="M982.4 72.6 L992.9 69.89999999999999" stroke="#D2B448" stroke-width="1.100"/>
<path d="M983.6 75.4 L994.1 72.69999999999999" stroke="#D2B448" stroke-width="1.100"/>
<circle cx="980" cy="80" r="6.600" fill="url(#gdollar)" stroke="#2C6030" stroke-width="0.500"/><text x="980" y="84" font-family="Liberation Sans,Arial,sans-serif" font-size="11.500" font-weight="bold" fill="#fff" stroke="#fff" stroke-width="0.500" text-anchor="middle">$</text>
<path d="M1007.500 64 L1013 62 L1018 63.500 V71 L1012 72.500 L1007.500 71 Z" fill="#2838D8" stroke="#111" stroke-width="0.600"/><path d="M1007.500 64 L1013 62 L1018 63.500 L1012.500 65.500 Z" fill="#18A028" stroke="#111" stroke-width="0.500"/><path d="M1007.500 69 L1012 70.500 L1018 69 V71 L1012 72.500 L1007.500 71 Z" fill="#E82020"/>
<path d="M1015 63.500 Q1021 63 1022 67 L1024.500 66.500 L1021.500 71.500 L1017 69 L1019.500 68 Q1019 66 1015 66.300 Z" fill="#28B838" stroke="#107018" stroke-width="0.400"/>
<path d="M1011.500 75 L1024 73.500 L1026.500 75 V83.500 L1014 84 L1011.500 82 Z" fill="#F05838" stroke="#B83020" stroke-width="0.500"/><path d="M1011.500 75 L1014 76.500 V84 L1011.500 82 Z" fill="#C83820"/>
<path d="M1024.500 76.500 L1031 76 L1032.500 80 V85 L1024.500 85.500 Z" fill="#7888B0" stroke="#48587C" stroke-width="0.500"/><path d="M1026 77.500 L1030.500 77.200 L1031.500 80 L1026 80.400 Z" fill="#B8D0F0"/><circle cx="1016.500" cy="84.800" r="1.700" fill="#222"/><circle cx="1028" cy="86" r="1.700" fill="#222"/>
<path d="M1082.500 77.500 Q1079 75 1080.800 71.500 Q1080.500 67.500 1084.500 67.300 Q1086.500 63.800 1090.500 65 Q1094 63.500 1096 66.500 Q1100 67.500 1099.300 71.500 Q1101 75.500 1097 77.500 Q1094.500 80.500 1090.500 79 Q1086 81 1082.500 77.500 Z" fill="url(#gcloud)" stroke="#9C9C9C" stroke-width="0.500"/>
<path d="M1099.300 64 L1088 71.700 L1091.800 73 L1080 83.600 L1097.300 74.300 L1092.800 72.600 Z" fill="#F8D028" stroke="#A88408" stroke-width="0.700" stroke-linejoin="round"/>
<rect x="1150.500" y="63.500" width="21" height="21" rx="2.500" fill="url(#gexit)" stroke="#A81010" stroke-width="1"/><text x="1161" y="78.200" font-family="Liberation Sans,Arial,sans-serif" font-size="11" fill="#fff" text-anchor="middle" textLength="18.3" lengthAdjust="spacingAndGlyphs">EXIT</text>
</svg>
<div style="left:8px;top:330px;width:1171px;height:1px;background:#B9B9B9;"></div>
<div style="left:1178px;top:92px;width:1px;height:239px;background:#B4B4B4;"></div>
<div style="left:10px;top:118px;width:1168px;height:212px;background:#C4DAF0;box-sizing:border-box;border:1px solid #7189A3;border-top-color:#6A8ACB;border-left-color:#6A8ACB;"></div>
<div style="left:11px;top:119px;width:1166px;height:1px;background:#EEF5FC;"></div>
<div style="left:12px;top:122px;width:1162px;height:204px;background:#fff;box-sizing:border-box;border:1px solid #A9A9A9;"></div>
<div style="left:1174px;top:122px;width:1px;height:205px;background:#fff;"></div>
<div style="left:12px;top:326px;width:1163px;height:1px;background:#fff;"></div>
<svg class="ic" style="left:0;top:0" width="1188" height="119" viewBox="0 0 1188 119" shape-rendering="auto"><path d="M12.5 118 V102.5 L18.5 96.5 H101.5 V118" fill="#fff" stroke="#6A8ACB" stroke-width="1"/><path d="M14 118 V103.3 L19.3 98 H101 V118 Z" fill="#C54B2B"/><path d="M102 118 V101.5 L107.5 96 H184 V118 Z" fill="#fff"/><path d="M102.2 101.8 L107.5 96.5 H183.5" fill="none" stroke="#6F87A2" stroke-width="1"/><path d="M183.5 96.5 V118" fill="none" stroke="#7391C2" stroke-width="1"/><path d="M103 118 V102.4 L107.4 98 H183 V118 Z" fill="#FB9A4B"/><path d="M185 118 V101.5 L190.5 96 H260 V118 Z" fill="#fff"/><path d="M185.2 101.8 L190.5 96.5 H259.5" fill="none" stroke="#6F87A2" stroke-width="1"/><path d="M259.5 96.5 V118" fill="none" stroke="#7391C2" stroke-width="1"/><path d="M186 118 V102.4 L190.4 98 H259 V118 Z" fill="#FB9A4B"/><path d="M261 118 V101.5 L266.5 96 H317 V118 Z" fill="#fff"/><path d="M261.2 101.8 L266.5 96.5 H316.5" fill="none" stroke="#6F87A2" stroke-width="1"/><path d="M316.5 96.5 V118" fill="none" stroke="#7391C2" stroke-width="1"/><path d="M262 118 V102.4 L266.4 98 H316 V118 Z" fill="#FB9A4B"/><path d="M318 118 V101.5 L323.5 96 H377 V118 Z" fill="#fff"/><path d="M318.2 101.8 L323.5 96.5 H376.5" fill="none" stroke="#6F87A2" stroke-width="1"/><path d="M376.5 96.5 V118" fill="none" stroke="#7391C2" stroke-width="1"/><path d="M319 118 V102.4 L323.4 98 H376 V118 Z" fill="#FB9A4B"/><path d="M378 118 V101.5 L383.5 96 H463 V118 Z" fill="#fff"/><path d="M378.2 101.8 L383.5 96.5 H462.5" fill="none" stroke="#6F87A2" stroke-width="1"/><path d="M462.5 96.5 V118" fill="none" stroke="#7391C2" stroke-width="1"/><path d="M379 118 V102.4 L383.4 98 H462 V118 Z" fill="#FB9A4B"/><path d="M464 118 V101.5 L469.5 96 H539 V118 Z" fill="#fff"/><path d="M464.2 101.8 L469.5 96.5 H538.5" fill="none" stroke="#6F87A2" stroke-width="1"/><path d="M538.5 96.5 V118" fill="none" stroke="#7391C2" stroke-width="1"/><path d="M465 118 V102.4 L469.4 98 H538 V118 Z" fill="#FB9A4B"/><path d="M540 118 V101.5 L545.5 96 H603 V118 Z" fill="#fff"/><path d="M540.2 101.8 L545.5 96.5 H602.5" fill="none" stroke="#6F87A2" stroke-width="1"/><path d="M602.5 96.5 V118" fill="none" stroke="#7391C2" stroke-width="1"/><path d="M541 118 V102.4 L545.4 98 H602 V118 Z" fill="#FB9A4B"/><path d="M604 118 V101.5 L609.5 96 H678 V118 Z" fill="#fff"/><path d="M604.2 101.8 L609.5 96.5 H677.5" fill="none" stroke="#6F87A2" stroke-width="1"/><path d="M677.5 96.5 V118" fill="none" stroke="#7391C2" stroke-width="1"/><path d="M605 118 V102.4 L609.4 98 H677 V118 Z" fill="#FB9A4B"/><path d="M679 118 V101.5 L684.5 96 H744 V118 Z" fill="#fff"/><path d="M679.2 101.8 L684.5 96.5 H743.5" fill="none" stroke="#6F87A2" stroke-width="1"/><path d="M743.5 96.5 V118" fill="none" stroke="#7391C2" stroke-width="1"/><path d="M680 118 V102.4 L684.4 98 H743 V118 Z" fill="#FB9A4B"/><path d="M745 118 V101.5 L750.5 96 H797 V118 Z" fill="#fff"/><path d="M745.2 101.8 L750.5 96.5 H796.5" fill="none" stroke="#6F87A2" stroke-width="1"/><path d="M796.5 96.5 V118" fill="none" stroke="#7391C2" stroke-width="1"/><path d="M746 118 V102.4 L750.4 98 H796 V118 Z" fill="#FB9A4B"/><path d="M798 118 V101.5 L803.5 96 H876 V118 Z" fill="#fff"/><path d="M798.2 101.8 L803.5 96.5 H875.5" fill="none" stroke="#6F87A2" stroke-width="1"/><path d="M875.5 96.5 V118" fill="none" stroke="#7391C2" stroke-width="1"/><path d="M799 118 V102.4 L803.4 98 H875 V118 Z" fill="#FB9A4B"/><path d="M877 118 V101.5 L882.5 96 H938 V118 Z" fill="#fff"/><path d="M877.2 101.8 L882.5 96.5 H937.5" fill="none" stroke="#6F87A2" stroke-width="1"/><path d="M937.5 96.5 V118" fill="none" stroke="#7391C2" stroke-width="1"/><path d="M878 118 V102.4 L882.4 98 H937 V118 Z" fill="#FB9A4B"/><path d="M939 118 V101.5 L944.5 96 H1043 V118 Z" fill="#fff"/><path d="M939.2 101.8 L944.5 96.5 H1042.5" fill="none" stroke="#6F87A2" stroke-width="1"/><path d="M1042.5 96.5 V118" fill="none" stroke="#7391C2" stroke-width="1"/><path d="M940 118 V102.4 L944.4 98 H1042 V118 Z" fill="#FB9A4B"/></svg>
<span class="tabs" style="left:17px;top:100px;letter-spacing:0.0px;">Information</span>
<span class="tab" style="left:107px;top:100px;">Customer</span>
<span class="tab" style="left:189px;top:100px;letter-spacing:0.2px;">Contacts</span>
<span class="tab" style="left:265px;top:100px;letter-spacing:-0.15px;">Event</span>
<span class="tab" style="left:322px;top:100px;">Dates</span>
<span class="tab" style="left:382px;top:100px;">Schedules</span>
<span class="tab" style="left:468px;top:100px;">Shipping</span>
<span class="tab" style="left:544px;top:100px;">Return</span>
<span class="tab" style="left:608px;top:100px;letter-spacing:0.25px;">Payment</span>
<span class="tab" style="left:683px;top:100px;letter-spacing:0.2px;">Default</span>
<span class="tab" style="left:749px;top:100px;">Cost</span>
<span class="tab" style="left:802px;top:100px;">Sub Total</span>
<span class="tab" style="left:881px;top:100px;letter-spacing:0.2px;">Status</span>
<span class="tab" style="left:943px;top:100px;letter-spacing:0.2px;">Flat Discounts</span>
<div style="left:13px;top:118px;width:88px;height:1px;background:#C4DAF0;"></div>
<span class="t" style="left:17px;top:130px;letter-spacing:0.6px;">Number</span>
<span class="t" style="left:17px;top:158px;letter-spacing:0.45px;">Description</span>
<span class="t" style="left:17px;top:186px;letter-spacing:0.3px;">Date Created</span>
<span class="t" style="left:17px;top:214px;letter-spacing:0.3px;">Site</span>
<span class="t" style="left:17px;top:242px;letter-spacing:0.15px;">Project Mgr.</span>
<span class="t" style="left:17px;top:270px;letter-spacing:0.4px;">Sales Person</span>
<span class="t" style="left:17px;top:298px;letter-spacing:0.3px;">Labor Planner</span>
<div style="left:99px;top:128px;width:100px;height:24px;background:#EEEEEE;border:1px solid #7A7A7A;box-sizing:border-box;"></div>
<span class="t" style="left:100px;top:133px;">ORD-1042</span>
<div style="left:99px;top:156px;width:255px;height:24px;background:#fff;border:1px solid #000;box-sizing:border-box;"></div>
<div style="left:99px;top:184px;width:100px;height:24px;background:#EEEEEE;border:1px solid #7A7A7A;box-sizing:border-box;"></div>
<span class="t" style="left:100px;top:189px;">11/17/2017</span>
<div style="left:99px;top:212px;width:100px;height:24px;background:#EEEEEE;border:1px solid #7A7A7A;box-sizing:border-box;"></div>
<span class="t" style="left:100px;top:217px;letter-spacing:-0.03px;">SANFRANCISCO</span>
<span class="t" style="left:212px;top:130px;letter-spacing:0.5px;">Version</span>
<div style="left:264px;top:128px;width:88px;height:24px;background:#EEEEEE;border:1px solid #7A7A7A;box-sizing:border-box;"></div>
<span class="t" style="left:265px;top:133px;">1</span>
<svg class="ic" style="left:332px;top:129px" width="18" height="18" viewBox="0 0 18 18"><use href="#mag"/></svg>
<span class="t" style="left:212px;top:186px;">Project</span>
<div style="left:264px;top:184px;width:88px;height:24px;background:#fff;border:1px solid #000;box-sizing:border-box;"></div>
<span class="t" style="left:265px;top:189px;">ORD-1042</span>
<svg class="ic" style="left:332px;top:185px" width="18" height="18" viewBox="0 0 18 18"><use href="#mag"/></svg>
<span class="t" style="left:212px;top:214px;">Sub Orders</span>
<div style="left:289px;top:212px;width:66px;height:24px;background:#EEEEEE;border:1px solid #7A7A7A;box-sizing:border-box;"></div>
<span class="t" style="left:290px;top:217px;">0</span>
<div style="left:99px;top:240px;width:255px;height:24px;background:#EEEEEE;border:1px solid #7F9DC9;box-shadow:inset 0 0 0 1px #C9DBF0;box-sizing:border-box;"></div>
<svg class="ic" style="left:317px;top:241px" width="18" height="18" viewBox="0 0 18 18"><use href="#mag"/></svg>
<div style="left:334px;top:241px;width:19px;height:22px;background:linear-gradient(#FFFFFF,#EAF1F9 45%,#C9DBEE);border-left:1px solid #8FA9CF;box-sizing:border-box;"></div>
<svg class="ic" style="left:339px;top:250px" width="10" height="5" viewBox="0 0 10 5"><path d="M0 0 H10 L5 5 Z" fill="#1a1a1a"/></svg>
<div style="left:99px;top:268px;width:255px;height:24px;background:#EEEEEE;border:1px solid #7F9DC9;box-shadow:inset 0 0 0 1px #C9DBF0;box-sizing:border-box;"></div>
<svg class="ic" style="left:317px;top:269px" width="18" height="18" viewBox="0 0 18 18"><use href="#mag"/></svg>
<div style="left:334px;top:269px;width:19px;height:22px;background:linear-gradient(#FFFFFF,#EAF1F9 45%,#C9DBEE);border-left:1px solid #8FA9CF;box-sizing:border-box;"></div>
<svg class="ic" style="left:339px;top:278px" width="10" height="5" viewBox="0 0 10 5"><path d="M0 0 H10 L5 5 Z" fill="#1a1a1a"/></svg>
<div style="left:99px;top:296px;width:255px;height:24px;background:#fff;border:1px solid #000;box-sizing:border-box;"></div>
<svg class="ic" style="left:334px;top:297px" width="18" height="18" viewBox="0 0 18 18"><use href="#mag"/></svg>
<div style="left:366px;top:131px;width:215px;height:98px;border:1px solid #B8B8B8;box-sizing:border-box;"></div>
<div style="left:371px;top:126px;width:96px;height:14px;background:#fff;"></div>
<span class="b" style="left:373px;top:125px;color:#000;">Charge Duration</span>
<span class="t" style="left:369px;top:143px;letter-spacing:0.13px;">Start Date/Time</span>
<div style="left:458px;top:141px;width:120px;height:24px;background:#EEEEEE;border:1px solid #7A7A7A;box-sizing:border-box;"></div>
<span class="t" style="left:459px;top:146px;letter-spacing:0.1px;">11/18/2017 09:00 AM</span>
<span class="t" style="left:369px;top:172px;letter-spacing:0.15px;">End Date/Time</span>
<div style="left:458px;top:170px;width:120px;height:24px;background:#EEEEEE;border:1px solid #7A7A7A;box-sizing:border-box;"></div>
<span class="t" style="left:459px;top:175px;letter-spacing:0.1px;">11/20/2017 09:00 AM</span>
<span class="t" style="left:369px;top:201px;">Duration</span>
<div style="left:458px;top:199px;width:85px;height:24px;background:#EEEEEE;border:1px solid #7A7A7A;box-sizing:border-box;"></div>
<span class="t" style="left:459px;top:204px;">2d</span>
<span class="t" style="left:588px;top:145px;letter-spacing:0.05px;">Conv. Date</span>
<div style="left:655px;top:141px;width:89px;height:24px;background:#EEEEEE;border:1px solid #7A7A7A;box-sizing:border-box;"></div>
<div style="left:589px;top:175px;width:12px;height:12px;background:linear-gradient(135deg,#FFFFFF 22%,#FBD3B0 58%,#F6A468 100%);"></div>
<div style="left:589px;top:175px;width:12px;height:1px;background:#6F87A2;"></div>
<div style="left:589px;top:175px;width:1px;height:12px;background:#6F87A2;"></div>
<div style="left:591px;top:186px;width:10px;height:1px;background:#6F87A2;"></div>
<div style="left:600px;top:177px;width:1px;height:10px;background:#6F87A2;"></div>
<svg class="ic" style="left:589px;top:175px" width="12" height="12" viewBox="0 0 12 12"><path d="M2.3 6.4 L4.8 5.2 L5.4 6.900 L9 2.400 L10.200 3.100 L5.900 9.800 L4.100 9.800 Z" fill="#0a0a0a"/></svg>
<span class="t" style="left:606px;top:174px;">Show Suggestions</span>
<div style="left:589px;top:199px;width:12px;height:12px;background:linear-gradient(135deg,#FFFFFF 22%,#FBD3B0 58%,#F6A468 100%);"></div>
<div style="left:589px;top:199px;width:12px;height:1px;background:#6F87A2;"></div>
<div style="left:589px;top:199px;width:1px;height:12px;background:#6F87A2;"></div>
<div style="left:591px;top:210px;width:10px;height:1px;background:#6F87A2;"></div>
<div style="left:600px;top:201px;width:1px;height:10px;background:#6F87A2;"></div>
<span class="t" style="left:606px;top:198px;letter-spacing:0.05px;">Event Pricing</span>
<span class="t" style="left:362px;top:240px;letter-spacing:0.45px;">Customer</span>
<div style="left:421px;top:236px;width:160px;height:24px;background:#EEEEEE;border:1px solid #7A7A7A;box-sizing:border-box;"></div>
<span class="t" style="left:422px;top:241px;">JBL</span>
<svg class="ic" style="left:561px;top:237px" width="18" height="18" viewBox="0 0 18 18"><use href="#mag"/></svg>
<span class="t" style="left:362px;top:269px;">Contact</span>
<div style="left:421px;top:265px;width:160px;height:24px;background:#EEEEEE;border:1px solid #7A7A7A;box-sizing:border-box;"></div>
<span class="t" style="left:422px;top:270px;letter-spacing:-0.15px;">MARK C WEBBER</span>
<svg class="ic" style="left:561px;top:266px" width="18" height="18" viewBox="0 0 18 18"><use href="#mag"/></svg>
<span class="t" style="left:362px;top:298px;letter-spacing:0.3px;">Contact Tel #</span>
<div style="left:451px;top:294px;width:129px;height:24px;background:#EEEEEE;border:1px solid #7A7A7A;box-sizing:border-box;"></div>
<span class="t" style="left:452px;top:299px;">4232212</span>
<span class="t" style="left:587px;top:240px;letter-spacing:0.5px;">Bill To</span>
<div style="left:654px;top:236px;width:160px;height:24px;background:#EEEEEE;border:1px solid #7A7A7A;box-sizing:border-box;"></div>
<span class="t" style="left:655px;top:241px;">JBL</span>
<svg class="ic" style="left:794px;top:237px" width="18" height="18" viewBox="0 0 18 18"><use href="#mag"/></svg>
<span class="t" style="left:587px;top:269px;letter-spacing:0.2px;">Bill Contact</span>
<div style="left:654px;top:265px;width:160px;height:24px;background:#EEEEEE;border:1px solid #7A7A7A;box-sizing:border-box;"></div>
<span class="t" style="left:655px;top:270px;letter-spacing:-0.15px;">MARK C WEBBER</span>
<svg class="ic" style="left:794px;top:266px" width="18" height="18" viewBox="0 0 18 18"><use href="#mag"/></svg>
<span class="t" style="left:587px;top:298px;letter-spacing:0.45px;">Language</span>
<div style="left:654px;top:294px;width:90px;height:24px;background:#EEEEEE;border:1px solid #7A7A7A;box-sizing:border-box;"></div>
<svg class="ic" style="left:724px;top:295px" width="18" height="18" viewBox="0 0 18 18"><use href="#magd"/></svg>
<div style="left:752px;top:148px;width:290px;height:83px;background:#C4DAF0;box-sizing:border-box;border:1px solid #7189A3;border-top-color:#6A8ACB;border-left-color:#6A8ACB;"></div>
<div style="left:753px;top:149px;width:288px;height:1px;background:#EEF5FC;"></div>
<div style="left:754px;top:152px;width:284px;height:75px;background:#fff;box-sizing:border-box;border:1px solid #A9A9A9;"></div>
<div style="left:1038px;top:152px;width:1px;height:76px;background:#fff;"></div>
<div style="left:754px;top:227px;width:285px;height:1px;background:#fff;"></div>
<svg class="ic" style="left:0;top:0" width="1188" height="149" viewBox="0 0 1188 149" shape-rendering="auto"><path d="M754.5 148 V132.5 L760.5 126.5 H843.5 V148" fill="#fff" stroke="#6A8ACB" stroke-width="1"/><path d="M756 148 V133.3 L761.3 128 H843 V148 Z" fill="#C54B2B"/><path d="M844 148 V131.5 L849.5 126 H964 V148 Z" fill="#fff"/><path d="M844.2 131.8 L849.5 126.5 H963.5" fill="none" stroke="#6F87A2" stroke-width="1"/><path d="M963.5 126.5 V148" fill="none" stroke="#7391C2" stroke-width="1"/><path d="M845 148 V132.4 L849.4 128 H963 V148 Z" fill="#FB9A4B"/></svg>
<span class="tabs" style="left:759px;top:130px;">Comments</span>
<span class="tab" style="left:849px;top:130px;">LaborComments</span>
<div style="left:755px;top:148px;width:88px;height:1px;background:#C4DAF0;"></div>
<div style="left:761px;top:154px;width:269px;height:69px;background:#EEEEEE;box-sizing:border-box;border:1px solid #6F7982;box-shadow:inset 0 0 0 1px #9AA1A8;"></div>
<svg class="ic" style="left:1010px;top:156px" width="18" height="18" viewBox="0 0 18 18"><use href="#mag"/></svg>
<span class="t" style="left:826px;top:247px;letter-spacing:0.28px;">Document Folder:</span>
<div style="left:1014px;top:240px;width:49px;height:23px;border:1px solid #C4C4C4;box-sizing:border-box;background:#fff;"></div>
<div style="left:1024px;top:242px;width:30px;height:20px;border:1px solid #7C7C7C;border-radius:2.5px;box-sizing:border-box;background:#fff;"></div>
<span class="t" style="left:1025px;top:244px;color:#000;font-size:11px;letter-spacing:-0.3px;-webkit-text-stroke:0.3px #000;">Reset</span>
<div style="left:826px;top:264px;width:216px;height:49px;background:#EEEEEE;box-sizing:border-box;border:1px solid #6F7982;box-shadow:inset 0 0 0 1px #9AA1A8;"></div>
<div style="left:8px;top:356px;width:1172px;height:315px;background:#C4DAF0;box-sizing:border-box;border:1px solid #7189A3;border-top-color:#6A8ACB;border-left-color:#6A8ACB;"></div>
<div style="left:9px;top:357px;width:1170px;height:1px;background:#EEF5FC;"></div>
<div style="left:10px;top:360px;width:1166px;height:307px;background:#fff;box-sizing:border-box;border:1px solid #A9A9A9;"></div>
<div style="left:1176px;top:360px;width:1px;height:308px;background:#fff;"></div>
<div style="left:10px;top:667px;width:1167px;height:1px;background:#fff;"></div>
<svg class="ic" style="left:0;top:0" width="1188" height="357" viewBox="0 0 1188 357" shape-rendering="auto"><path d="M10.5 356 V340.5 L16.5 334.5 H76.5 V356" fill="#fff" stroke="#6A8ACB" stroke-width="1"/><path d="M12 356 V341.3 L17.3 336 H76 V356 Z" fill="#C54B2B"/><path d="M77 356 V339.5 L82.5 334 H135 V356 Z" fill="#fff"/><path d="M77.2 339.8 L82.5 334.5 H134.5" fill="none" stroke="#6F87A2" stroke-width="1"/><path d="M134.5 334.5 V356" fill="none" stroke="#7391C2" stroke-width="1"/><path d="M78 356 V340.4 L82.4 336 H134 V356 Z" fill="#FB9A4B"/></svg>
<span class="tabs" style="left:15px;top:338px;">Item(s)</span>
<span class="tab" style="left:82px;top:338px;">Labor</span>
<div style="left:11px;top:356px;width:65px;height:1px;background:#C4DAF0;"></div>
<div style="left:12px;top:362px;width:1162px;height:303px;background:#fff;box-sizing:border-box;border:1px solid #7189A3;"></div>
<div style="left:13px;top:363px;width:1160px;height:20px;background:#FF6E3C;"></div>
<div style="left:13px;top:383px;width:1160px;height:18px;background:#FA9848;"></div>
<div style="left:13px;top:363px;width:1160px;height:39px;overflow:hidden;">
<div style="left:0px;top:0;width:14px;height:19px;box-sizing:border-box;border:1px solid #8B3A22;background:#C54B2B;box-shadow:inset 1px 1px 0 #FF7446;"></div>
<span class="h" style="left:1px;top:3px;width:14px;">C</span>
<div style="left:14px;top:20px;width:1px;height:19px;background:#C27A34;"></div>
<div style="left:15px;top:0;width:19px;height:19px;box-sizing:border-box;border:1px solid #8B3A22;background:#C54B2B;box-shadow:inset 1px 1px 0 #FF7446;"></div>
<span class="h" style="left:16px;top:3px;width:19px;">L</span>
<div style="left:34px;top:20px;width:1px;height:19px;background:#C27A34;"></div>
<div style="left:35px;top:0;width:14px;height:19px;box-sizing:border-box;border:1px solid #8B3A22;background:#C54B2B;box-shadow:inset 1px 1px 0 #FF7446;"></div>
<span class="h" style="left:36px;top:3px;width:14px;">T</span>
<div style="left:49px;top:20px;width:1px;height:19px;background:#C27A34;"></div>
<div style="left:50px;top:0;width:14px;height:19px;box-sizing:border-box;border:1px solid #8B3A22;background:#C54B2B;box-shadow:inset 1px 1px 0 #FF7446;"></div>
<span class="h" style="left:51px;top:3px;width:14px;">S</span>
<div style="left:64px;top:20px;width:1px;height:19px;background:#C27A34;"></div>
<div style="left:65px;top:0;width:75px;height:19px;box-sizing:border-box;border:1px solid #8B3A22;background:#C54B2B;box-shadow:inset 1px 1px 0 #FF7446;"></div>
<span class="h" style="left:66px;top:3px;width:75px;">Status</span>
<div style="left:140px;top:20px;width:1px;height:19px;background:#C27A34;"></div>
<div style="left:141px;top:0;width:41px;height:19px;box-sizing:border-box;border:1px solid #8B3A22;background:#C54B2B;box-shadow:inset 1px 1px 0 #FF7446;"></div>
<span class="h" style="left:142px;top:3px;width:41px;">Action</span>
<div style="left:182px;top:20px;width:1px;height:19px;background:#C27A34;"></div>
<div style="left:184px;top:0;width:100px;height:19px;box-sizing:border-box;border:1px solid #8B3A22;background:#C54B2B;box-shadow:inset 1px 1px 0 #FF7446;"></div>
<span class="h" style="left:185px;top:3px;width:100px;">Product ID</span>
<div style="left:284px;top:20px;width:1px;height:19px;background:#C27A34;"></div>
<div style="left:285px;top:0;width:259px;height:19px;box-sizing:border-box;border:1px solid #8B3A22;background:#C54B2B;box-shadow:inset 1px 1px 0 #FF7446;"></div>
<span class="h" style="left:286px;top:3px;width:259px;">Description</span>
<div style="left:544px;top:20px;width:1px;height:19px;background:#C27A34;"></div>
<div style="left:545px;top:0;width:54px;height:19px;box-sizing:border-box;border:1px solid #8B3A22;background:#C54B2B;box-shadow:inset 1px 1px 0 #FF7446;"></div>
<span class="h" style="left:546px;top:3px;width:54px;">Duration</span>
<div style="left:599px;top:20px;width:1px;height:19px;background:#C27A34;"></div>
<div style="left:600px;top:0;width:29px;height:19px;box-sizing:border-box;border:1px solid #8B3A22;background:#C54B2B;box-shadow:inset 1px 1px 0 #FF7446;"></div>
<span class="h" style="left:601px;top:3px;width:29px;">Qty</span>
<div style="left:629px;top:20px;width:1px;height:19px;background:#C27A34;"></div>
<div style="left:630px;top:0;width:59px;height:19px;box-sizing:border-box;border:1px solid #8B3A22;background:#C54B2B;box-shadow:inset 1px 1px 0 #FF7446;"></div>
<span class="h" style="left:631px;top:3px;width:59px;">Unit Price</span>
<div style="left:689px;top:20px;width:1px;height:19px;background:#C27A34;"></div>
<div style="left:690px;top:0;width:54px;height:19px;box-sizing:border-box;border:1px solid #8B3A22;background:#C54B2B;box-shadow:inset 1px 1px 0 #FF7446;"></div>
<span class="h" style="left:691px;top:3px;width:54px;">Discount</span>
<div style="left:744px;top:20px;width:1px;height:19px;background:#C27A34;"></div>
<div style="left:745px;top:0;width:59px;height:19px;box-sizing:border-box;border:1px solid #8B3A22;background:#C54B2B;box-shadow:inset 1px 1px 0 #FF7446;"></div>
<span class="h" style="left:746px;top:3px;width:59px;">Net Disc</span>
<div style="left:804px;top:20px;width:1px;height:19px;background:#C27A34;"></div>
<div style="left:805px;top:0;width:59px;height:19px;box-sizing:border-box;border:1px solid #8B3A22;background:#C54B2B;box-shadow:inset 1px 1px 0 #FF7446;"></div>
<span class="h" style="left:806px;top:3px;width:59px;">Net Each</span>
<div style="left:864px;top:20px;width:1px;height:19px;background:#C27A34;"></div>
<div style="left:865px;top:0;width:74px;height:19px;box-sizing:border-box;border:1px solid #8B3A22;background:#C54B2B;box-shadow:inset 1px 1px 0 #FF7446;"></div>
<span class="h" style="left:866px;top:3px;width:74px;">Amount</span>
<div style="left:939px;top:20px;width:1px;height:19px;background:#C27A34;"></div>
<div style="left:940px;top:0;width:39px;height:19px;box-sizing:border-box;border:1px solid #8B3A22;background:#C54B2B;box-shadow:inset 1px 1px 0 #FF7446;"></div>
<span class="h" style="left:941px;top:3px;width:39px;">Unit</span>
<div style="left:979px;top:20px;width:1px;height:19px;background:#C27A34;"></div>
<div style="left:980px;top:0;width:29px;height:19px;box-sizing:border-box;border:1px solid #8B3A22;background:#C54B2B;box-shadow:inset 1px 1px 0 #FF7446;"></div>
<span class="h" style="left:981px;top:3px;width:29px;">DIW</span>
<div style="left:1009px;top:20px;width:1px;height:19px;background:#C27A34;"></div>
<div style="left:1010px;top:0;width:49px;height:19px;box-sizing:border-box;border:1px solid #8B3A22;background:#C54B2B;box-shadow:inset 1px 1px 0 #FF7446;"></div>
<span class="h" style="left:1011px;top:3px;width:49px;">DIM</span>
<div style="left:1059px;top:20px;width:1px;height:19px;background:#C27A34;"></div>
<div style="left:1060px;top:0;width:119px;height:19px;box-sizing:border-box;border:1px solid #8B3A22;background:#C54B2B;box-shadow:inset 1px 1px 0 #FF7446;"></div>
<span class="h" style="left:1061px;top:3px;width:119px;">Start Date</span>
<div style="left:1179px;top:20px;width:1px;height:19px;background:#C27A34;"></div>
</div>
<div style="left:13px;top:401px;width:1160px;height:1px;background:#B9783A;"></div>
<div style="left:14px;top:386px;width:13px;height:13px;background:#fff;"></div>
<div style="left:16px;top:388px;width:9px;height:9px;background:linear-gradient(135deg,#FFF4EA 0%,#F8C09A 40%,#F08E4E 100%);"></div>
<div style="left:14px;top:386px;width:13px;height:1px;background:#6F87A2;"></div>
<div style="left:16px;top:397px;width:10px;height:1px;background:#6F87A2;"></div>
<div style="left:25px;top:388px;width:1px;height:10px;background:#6F87A2;"></div>
<div style="left:31px;top:386px;width:13px;height:13px;background:#fff;"></div>
<div style="left:33px;top:388px;width:9px;height:9px;background:linear-gradient(135deg,#FFF4EA 0%,#F8C09A 40%,#F08E4E 100%);"></div>
<div style="left:31px;top:386px;width:13px;height:1px;background:#6F87A2;"></div>
<div style="left:33px;top:397px;width:10px;height:1px;background:#6F87A2;"></div>
<div style="left:42px;top:388px;width:1px;height:10px;background:#6F87A2;"></div>
<div style="left:49px;top:386px;width:13px;height:13px;background:#fff;"></div>
<div style="left:51px;top:388px;width:9px;height:9px;background:linear-gradient(135deg,#FFF4EA 0%,#F8C09A 40%,#F08E4E 100%);"></div>
<div style="left:49px;top:386px;width:13px;height:1px;background:#6F87A2;"></div>
<div style="left:51px;top:397px;width:10px;height:1px;background:#6F87A2;"></div>
<div style="left:60px;top:388px;width:1px;height:10px;background:#6F87A2;"></div>
<svg class="ic" style="left:49px;top:386px" width="12" height="12" viewBox="0 0 12 12"><path d="M2.3 6.4 L4.8 5.2 L5.4 6.900 L9 2.400 L10.200 3.100 L5.900 9.800 L4.100 9.800 Z" fill="#0a0a0a"/></svg>
<div style="left:64px;top:386px;width:13px;height:13px;background:#fff;"></div>
<div style="left:66px;top:388px;width:9px;height:9px;background:linear-gradient(135deg,#FFF4EA 0%,#F8C09A 40%,#F08E4E 100%);"></div>
<div style="left:64px;top:386px;width:13px;height:1px;background:#6F87A2;"></div>
<div style="left:66px;top:397px;width:10px;height:1px;background:#6F87A2;"></div>
<div style="left:75px;top:388px;width:1px;height:10px;background:#6F87A2;"></div>
<span class="r" style="left:79px;top:385px;letter-spacing:0.05px;">Not Available</span>
<span class="r" style="left:154px;top:385px;">Rent</span>
<span class="r" style="left:198px;top:385px;letter-spacing:0.15px;">JBLHS21-01</span>
<span class="r" style="left:305px;top:385px;letter-spacing:0.15px;">JBLHS21</span>
<span class="r" style="left:559px;top:385px;">2d</span>
<span class="r" style="left:613px;top:385px;width:28px;text-align:right;">1</span>
<span class="r" style="left:643px;top:385px;width:58px;text-align:right;">0.00</span>
<span class="r" style="left:703px;top:385px;width:53px;text-align:right;">0.00</span>
<span class="r" style="left:758px;top:385px;width:58px;text-align:right;">0.00</span>
<span class="r" style="left:818px;top:385px;width:58px;text-align:right;">0.00</span>
<span class="r" style="left:878px;top:385px;width:73px;text-align:right;">0.00</span>
<span class="r" style="left:954px;top:385px;">Day</span>
<span class="r" style="left:993px;top:385px;width:28px;text-align:right;">7.00</span>
<span class="r" style="left:1023px;top:385px;width:48px;text-align:right;">28.00</span>
<div style="left:1073px;top:383px;width:100px;height:18px;overflow:hidden;"><span class="r" style="left:2px;top:2px;letter-spacing:0.27px;">11/18/2017 09:00</span></div>
<div style="left:77px;top:361px;width:77px;height:40px;border:2px solid #B00C0C;box-sizing:border-box;"></div>
<div style="left:195px;top:363px;width:103px;height:40px;border:2px solid #B00C0C;box-sizing:border-box;"></div>
<div style="left:13px;top:647px;width:1159px;height:1px;background:#7189A3;"></div>
<div style="left:13px;top:648px;width:1159px;height:15px;background:#EEEEEE;"></div>
<div style="left:13px;top:648px;width:1159px;height:1px;background:#D6E4F3;"></div>
<div style="left:13px;top:662px;width:1159px;height:1px;background:#7189A3;"></div>
<div style="left:13px;top:663px;width:1143px;height:1px;background:#C4DAF0;"></div>
<div style="left:13px;top:648px;width:15px;height:14px;background:#EEEEEE;box-shadow:inset 1px 1px 0 #fff;"></div>
<svg class="ic" style="left:19px;top:652px" width="4" height="8" viewBox="0 0 4 8"><path d="M4 0 V8 L0 4 Z" fill="#222"/></svg>
<div style="left:1156px;top:648px;width:16px;height:14px;background:#EEEEEE;border-left:1px solid #7189A3;border-right:1px solid #7189A3;box-sizing:border-box;box-shadow:inset 0 1px 0 #fff;"></div>
<svg class="ic" style="left:1163px;top:652px" width="4" height="8" viewBox="0 0 4 8"><path d="M0 0 V8 L4 4 Z" fill="#222"/></svg>
<div style="left:28px;top:647px;width:426px;height:16px;background:linear-gradient(176deg,#F1BF98 0%,#ECAE82 45%,#E89F6E 100%);border:1px solid #FFBE00;box-sizing:border-box;"></div>
<div style="left:238px;top:651px;width:1px;height:8px;background:#A8A0B0;"></div>
<div style="left:240px;top:651px;width:1px;height:8px;background:#A8A0B0;"></div>
<div style="left:242px;top:651px;width:1px;height:8px;background:#A8A0B0;"></div>
<span class="tot" style="left:70px;top:677px;">Items</span>
<div style="left:120px;top:673px;width:100px;height:24px;background:#EEEEEE;border:1px solid #7A7A7A;box-sizing:border-box;"></div>
<span class="tot" style="left:235px;top:677px;">Labor</span>
<div style="left:287px;top:673px;width:100px;height:24px;background:#EEEEEE;border:1px solid #7A7A7A;box-sizing:border-box;"></div>
<span class="tot" style="left:446px;top:677px;">Sub Total</span>
<div style="left:525px;top:673px;width:100px;height:24px;background:#EEEEEE;border:1px solid #7A7A7A;box-sizing:border-box;"></div>
<span class="tot" style="left:636px;top:677px;">Tax</span>
<div style="left:670px;top:673px;width:100px;height:24px;background:#EEEEEE;border:1px solid #7A7A7A;box-sizing:border-box;"></div>
<div style="left:813px;top:673px;width:89px;height:23px;border:1px solid #C6C6C6;box-sizing:border-box;background:#fff;"></div>
<span class="tot" style="left:842px;top:677px;">Total</span>
<div style="left:906px;top:673px;width:100px;height:24px;background:#EEEEEE;border:1px solid #7A7A7A;box-sizing:border-box;"></div>
<span class="tot" style="left:906px;top:677px;letter-spacing:0.5px;">0.00</span>
<div style="left:8px;top:707px;width:1171px;height:24px;background:#fff;box-sizing:border-box;border:1px solid #C6C6C6;"></div>
<div style="left:9px;top:708px;width:1169px;height:1px;background:#7E7E7E;"></div>
<div style="left:9px;top:708px;width:1px;height:22px;background:#7E7E7E;"></div>
<div style="left:7px;top:31px;width:1px;height:701px;background:#D3825A;"></div>
<div style="left:1180px;top:31px;width:1px;height:701px;background:#D3825A;"></div>
<div style="left:8px;top:732px;width:1172px;height:1px;background:#D98A62;"></div>
</body></html>
